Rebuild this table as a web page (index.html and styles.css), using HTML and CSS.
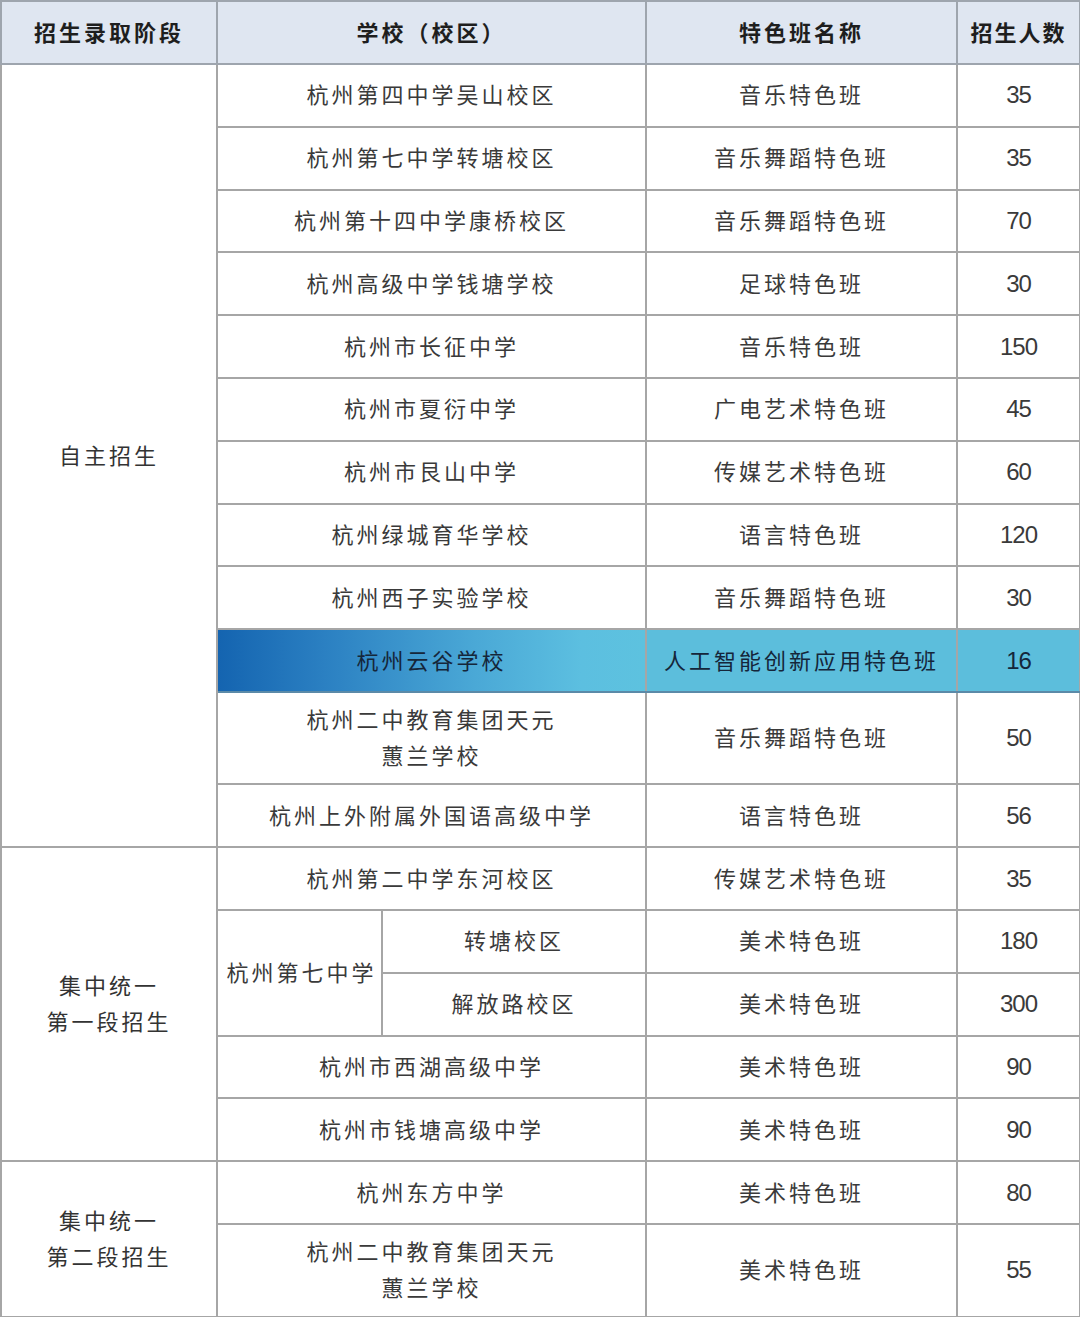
FILE: index.html
```html
<!DOCTYPE html>
<html lang="zh-CN">
<head>
<meta charset="utf-8">
<title>特色班招生</title>
<link rel="stylesheet" href="styles.css">
</head>
<body>
<table class="grid">
  <colgroup>
    <col class="c-stage">
    <col class="c-school-a">
    <col class="c-school-b">
    <col class="c-class">
    <col class="c-num">
  </colgroup>
  <thead>
    <tr class="head">
      <th>招生录取阶段</th>
      <th colspan="2">学校（校区）</th>
      <th>特色班名称</th>
      <th class="h-num">招生人数</th>
    </tr>
  </thead>
  <tbody>
    <tr><td rowspan="12" class="stage">自主招生</td><td colspan="2">杭州第四中学吴山校区</td><td>音乐特色班</td><td class="num">35</td></tr>
    <tr><td colspan="2">杭州第七中学转塘校区</td><td>音乐舞蹈特色班</td><td class="num">35</td></tr>
    <tr><td colspan="2">杭州第十四中学康桥校区</td><td>音乐舞蹈特色班</td><td class="num">70</td></tr>
    <tr><td colspan="2">杭州高级中学钱塘学校</td><td>足球特色班</td><td class="num">30</td></tr>
    <tr><td colspan="2">杭州市长征中学</td><td>音乐特色班</td><td class="num">150</td></tr>
    <tr><td colspan="2">杭州市夏衍中学</td><td>广电艺术特色班</td><td class="num">45</td></tr>
    <tr><td colspan="2">杭州市艮山中学</td><td>传媒艺术特色班</td><td class="num">60</td></tr>
    <tr><td colspan="2">杭州绿城育华学校</td><td>语言特色班</td><td class="num">120</td></tr>
    <tr><td colspan="2">杭州西子实验学校</td><td>音乐舞蹈特色班</td><td class="num">30</td></tr>
    <tr class="hl"><td colspan="2" class="hl-school">杭州云谷学校</td><td class="hl-cell">人工智能创新应用特色班</td><td class="num hl-cell">16</td></tr>
    <tr class="tall"><td colspan="2">杭州二中教育集团天元<br>蕙兰学校</td><td>音乐舞蹈特色班</td><td class="num">50</td></tr>
    <tr><td colspan="2">杭州上外附属外国语高级中学</td><td>语言特色班</td><td class="num">56</td></tr>

    <tr><td rowspan="5" class="stage">集中统一<br>第一段招生</td><td colspan="2">杭州第二中学东河校区</td><td>传媒艺术特色班</td><td class="num">35</td></tr>
    <tr><td rowspan="2" class="parent">杭州第七中学</td><td>转塘校区</td><td>美术特色班</td><td class="num">180</td></tr>
    <tr><td>解放路校区</td><td>美术特色班</td><td class="num">300</td></tr>
    <tr><td colspan="2">杭州市西湖高级中学</td><td>美术特色班</td><td class="num">90</td></tr>
    <tr><td colspan="2">杭州市钱塘高级中学</td><td>美术特色班</td><td class="num">90</td></tr>

    <tr><td rowspan="2" class="stage">集中统一<br>第二段招生</td><td colspan="2">杭州东方中学</td><td>美术特色班</td><td class="num">80</td></tr>
    <tr class="tall"><td colspan="2">杭州二中教育集团天元<br>蕙兰学校</td><td>美术特色班</td><td class="num">55</td></tr>
  </tbody>
</table>
</body>
</html>
```

FILE: styles.css
```css
html, body {
  margin: 0;
  padding: 0;
  background: #ffffff;
}

.grid {
  width: 1079px;
  border-collapse: collapse;
  table-layout: fixed;
  font-family: "Noto Sans CJK SC", "Noto Sans", sans-serif;
  color: #3a3a3a;
}

.c-stage { width: 216px; }
.c-school-a { width: 165px; }
.c-school-b { width: 264px; }
.c-class { width: 311px; }
.c-num { width: 123px; }

.grid th,
.grid td {
  border: 2px solid #a6a6a6;
  text-align: center;
  vertical-align: middle;
  padding: 0 0 4px 0;
  font-size: 22px;
  letter-spacing: 3px;
  line-height: 36px;
}

.grid tbody tr { height: 62.8px; }
.grid tbody tr.tall { height: 92.5px; }

.grid .head { height: 63px; }
.grid .head th {
  background: #dfe6f1;
  color: #1e1e1e;
  font-weight: 700;
  letter-spacing: 3px;
  border-color: #9ea5ae;
}
.grid .head th.h-num { letter-spacing: 2px; }

.grid td.stage { color: #333333; }
.grid td.parent { padding-left: 4px; }

.grid td.num {
  font-family: "Liberation Sans", Arial, sans-serif;
  font-size: 24px;
  letter-spacing: -1px;
  color: #3a3a3a;
  padding: 0;
}

.grid .hl td {
  color: #15263a;
  border-top-color: #5b8aa8;
  border-bottom-color: #5b8aa8;
}
.grid td.hl-school {
  background: linear-gradient(90deg, #1464b0 0%, #2b80c2 25%, #4aa8d6 60%, #5cbfe0 85%, #5dc2df 100%);
}
.grid td.hl-cell {
  background: #5cbedc;
}
```
